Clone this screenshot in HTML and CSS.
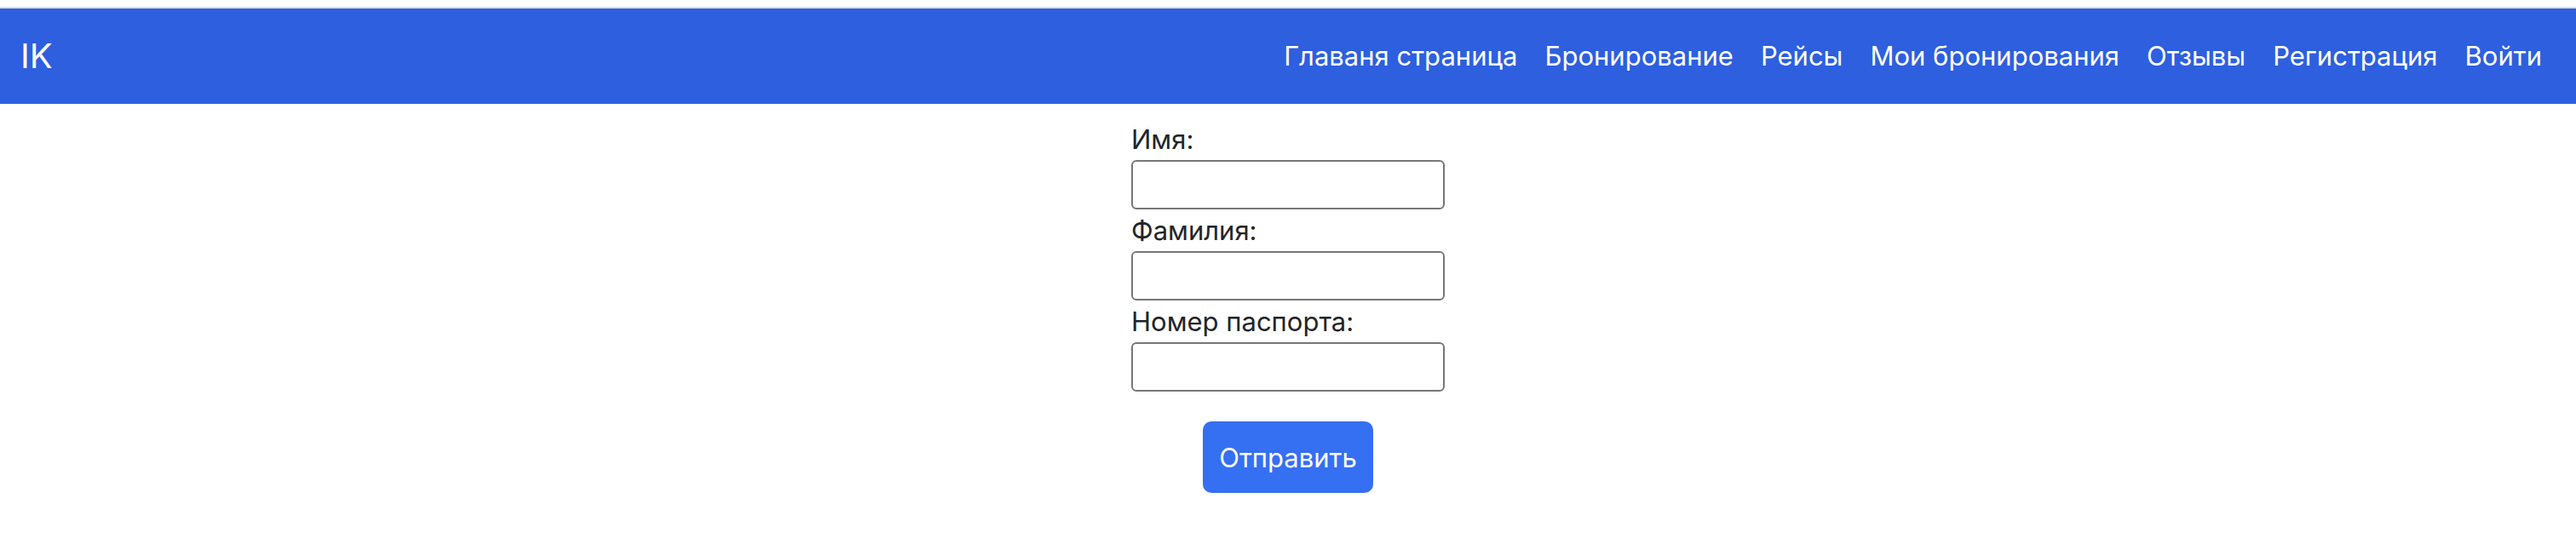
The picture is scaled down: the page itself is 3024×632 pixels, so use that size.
FILE: index.html
```html
<!DOCTYPE html>
<html lang="ru">
<head>
<meta charset="utf-8">
<title>IK</title>
<link rel="stylesheet" href="styles.css">
</head>
<body>
<div class="topline"></div>
<nav class="navbar">
  <a class="brand" href="#">IK</a>
  <ul class="nav-links">
    <li><a href="#">Главаня страница</a></li>
    <li><a href="#">Бронирование</a></li>
    <li><a href="#">Рейсы</a></li>
    <li><a href="#">Мои бронирования</a></li>
    <li><a href="#">Отзывы</a></li>
    <li><a href="#">Регистрация</a></li>
    <li><a href="#">Войти</a></li>
  </ul>
</nav>
<main class="content">
  <form class="booking-form">
    <div class="fields">
      <label class="field-label" for="name">Имя:</label>
      <input class="field-input" id="name" type="text">
      <label class="field-label" for="surname">Фамилия:</label>
      <input class="field-input" id="surname" type="text">
      <label class="field-label" for="passport">Номер паспорта:</label>
      <input class="field-input" id="passport" type="text">
    </div>
    <button class="submit-btn" type="submit">Отправить</button>
  </form>
</main>
</body>
</html>
```
FILE: styles.css
```css
* { box-sizing: border-box; }
html, body { margin: 0; padding: 0; background: #ffffff; }
body {
  font-family: Inter, "Noto Sans", "Liberation Sans", sans-serif;
  color: #212529;
}
.topline {
  height: 10px;
  background: #ffffff;
  border-bottom: 2px solid #dcdcdc;
}
.navbar {
  height: 112px;
  background: #2d5fdf;
  display: flex;
  align-items: center;
  justify-content: space-between;
  padding: 0 24px;
}
.brand {
  color: #ffffff;
  text-decoration: none;
  font-size: 40px;
  line-height: 1;
}
.nav-links {
  list-style: none;
  margin: 0;
  padding: 0;
  display: flex;
}
.nav-links a {
  display: block;
  color: #ffffff;
  text-decoration: none;
  font-size: 31px;
  line-height: 1.5;
  padding: 0 16px;
}
.content {
  display: flex;
  justify-content: center;
  padding-top: 17px;
}
.booking-form {
  display: flex;
  flex-direction: column;
  align-items: center;
}
.fields {
  display: flex;
  flex-direction: column;
  width: 368px;
}
.field-label {
  font-size: 31px;
  line-height: 49px;
  height: 49px;
}
.field-input {
  width: 368px;
  height: 58px;
  border: 2px solid #767676;
  border-radius: 6px;
  margin: 0;
  font-size: 30px;
  background: #ffffff;
}
.submit-btn {
  margin-top: 35px;
  height: 84px;
  padding: 0 19px;
  background: #356ff2;
  color: #ffffff;
  border: none;
  border-radius: 10px;
  font-family: Inter, "Noto Sans", "Liberation Sans", sans-serif;
  font-size: 31px;
}
```
